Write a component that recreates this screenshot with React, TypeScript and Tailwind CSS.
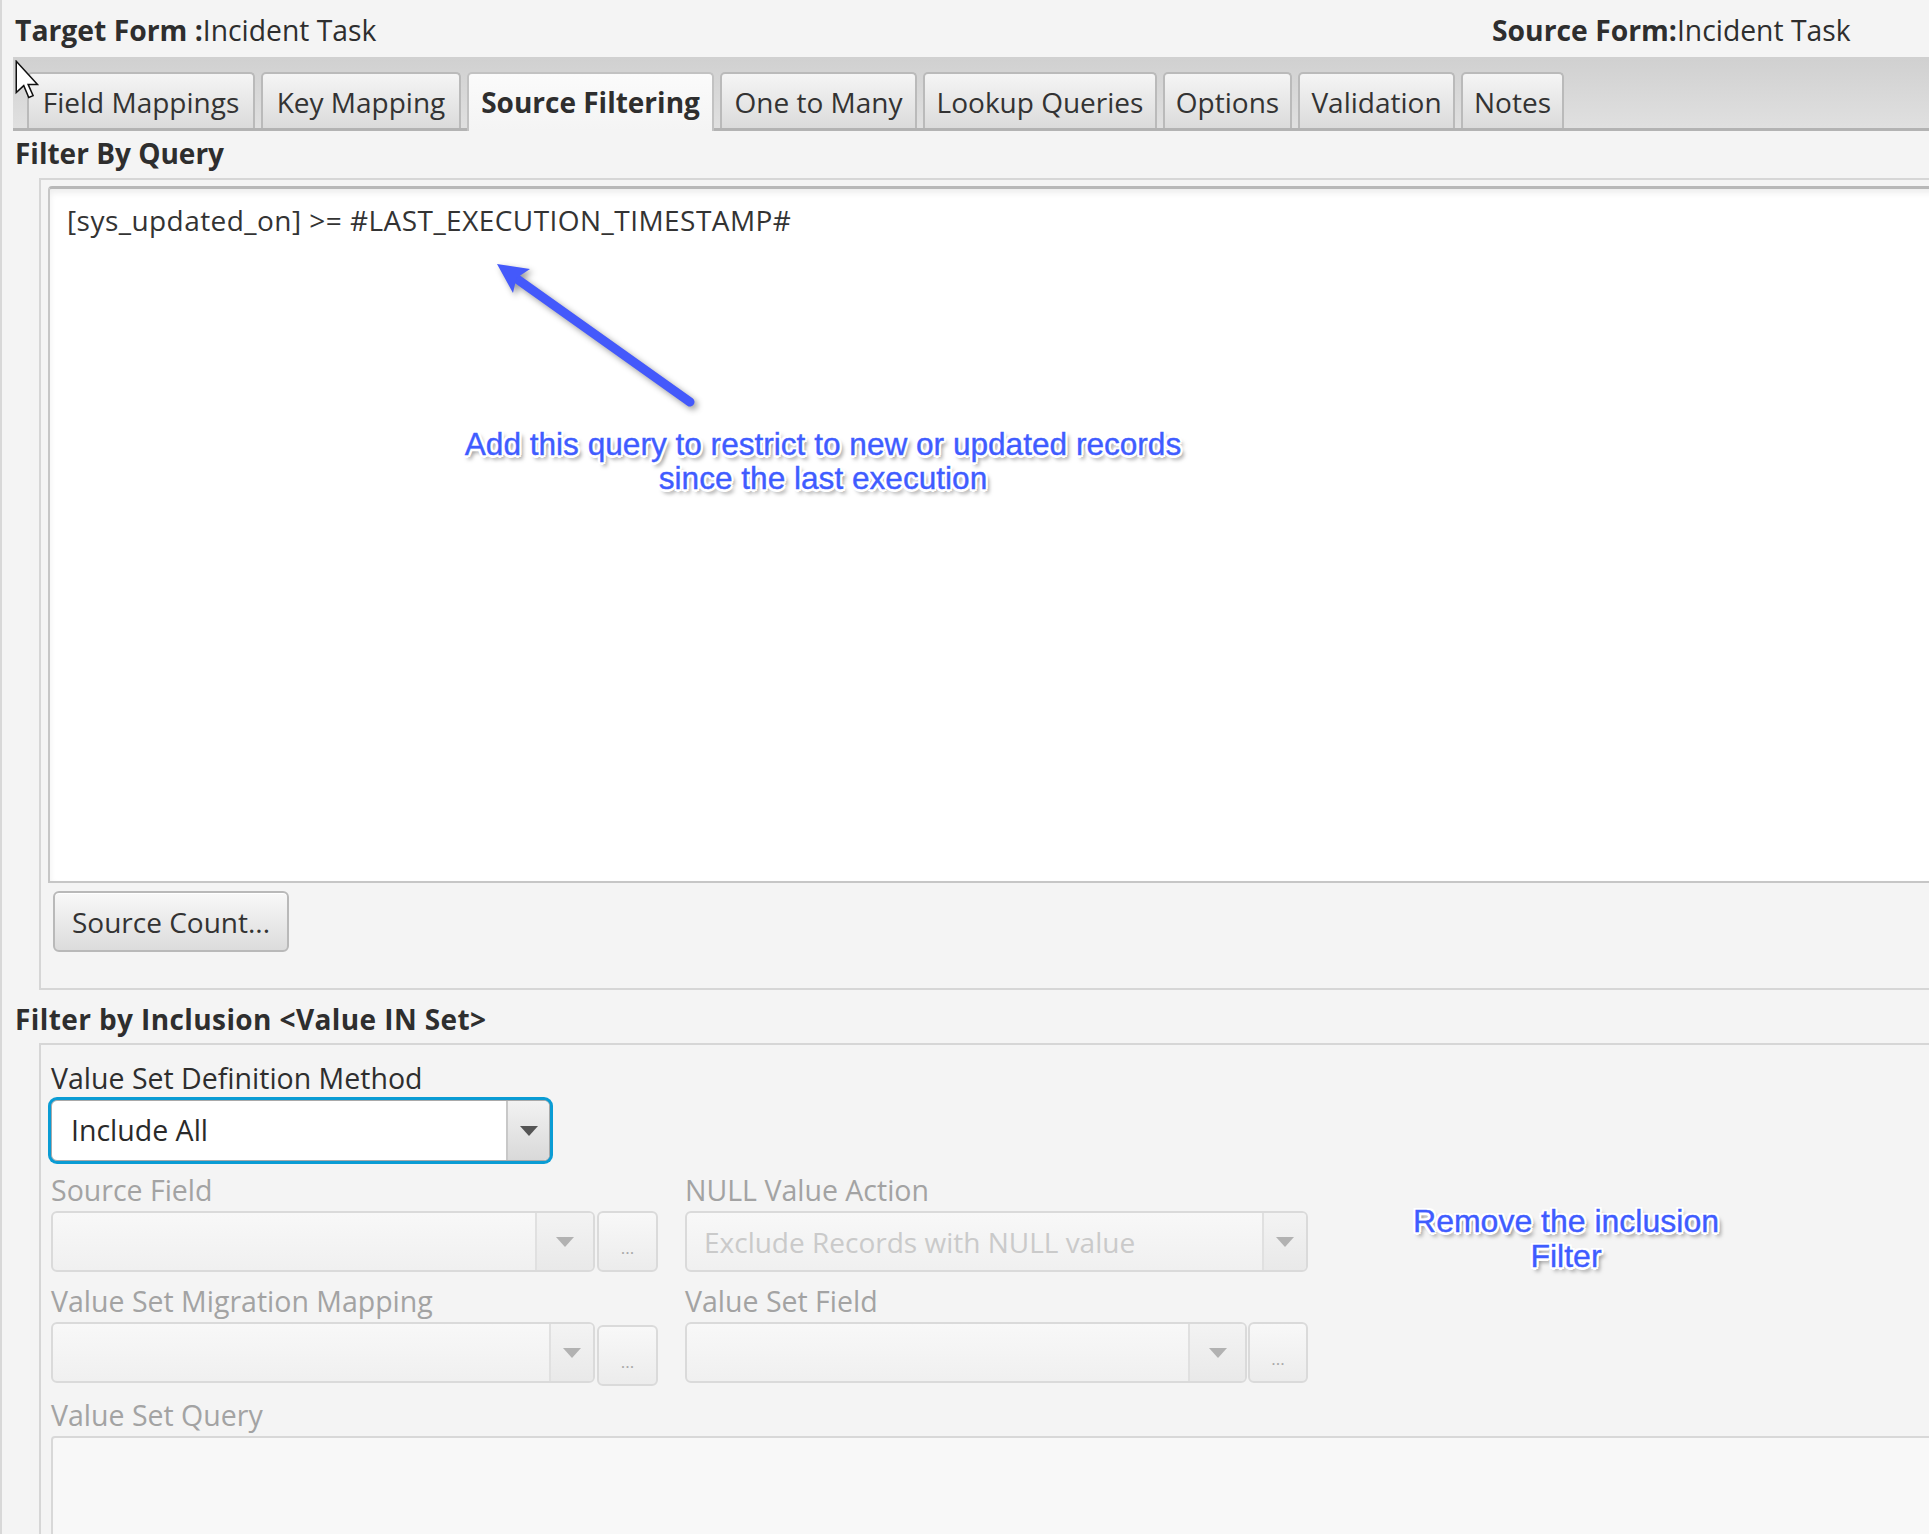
import React from "react";

type Tab = { label: string; w: string; active?: boolean };

const tabs: Tab[] = [
  { label: "Field Mappings", w: "w-[228px]" },
  { label: "Key Mapping", w: "w-[200px]" },
  { label: "Source Filtering", w: "w-[247px]", active: true },
  { label: "One to Many", w: "w-[197px]" },
  { label: "Lookup Queries", w: "w-[234px]" },
  { label: "Options", w: "w-[129px]" },
  { label: "Validation", w: "w-[157px]" },
  { label: "Notes", w: "w-[103px]" },
];

function TabButton({ tab }: { tab: Tab }) {
  if (tab.active) {
    return (
      <div
        className={`relative z-10 -mb-[3px] flex h-[59px] ${tab.w} items-center justify-center rounded-t-[5px] border-2 border-b-0 border-[#c2c2c2] bg-gradient-to-b from-[#fbfbfb] to-[#f4f4f4] pb-[2px] text-[28px] font-bold text-[#2e2e2e]`}
      >
        {tab.label}
      </div>
    );
  }
  return (
    <div
      className={`flex h-[56px] ${tab.w} items-center justify-center rounded-t-[5px] border-2 border-b-0 border-[#bababa] bg-gradient-to-b from-[#f5f5f5] to-[#dbdbdb] pt-[1px] text-[28px] text-[#333]`}
    >
      {tab.label}
    </div>
  );
}

function Triangle({ dark }: { dark?: boolean }) {
  return dark ? (
    <div className="h-0 w-0 border-x-[9px] border-t-[10px] border-x-transparent border-t-[#555]" />
  ) : (
    <div className="h-0 w-0 border-x-[9px] border-t-[10px] border-x-transparent border-t-[#b2b2b2]" />
  );
}

function Label({ children, muted }: { children: React.ReactNode; muted?: boolean }) {
  return (
    <div
      className={`flex h-[36px] items-center text-[28.5px] leading-[36px] ${muted ? "text-[#a3a3a3]" : "text-[#2e2e2e]"}`}
    >
      {children}
    </div>
  );
}

function DisabledCombo({ w, arrow, text }: { w: string; arrow: string; text?: string }) {
  return (
    <div
      className={`flex h-[61px] ${w} overflow-hidden rounded-[6px] border-2 border-[#dadada] bg-gradient-to-b from-[#f8f8f8] to-[#f0f0f0]`}
    >
      <div className="flex flex-1 items-center pl-[17px] text-[28px] text-[#cacaca]">{text}</div>
      <div
        className={`flex ${arrow} items-center justify-center border-l-2 border-[#e0e0e0] bg-gradient-to-b from-[#f3f3f3] to-[#e9e9e9]`}
      >
        <Triangle />
      </div>
    </div>
  );
}

function DotsButton({ w, offset }: { w: string; offset?: boolean }) {
  return (
    <div
      className={`flex h-[61px] ${w} ${offset ? "mt-[3px]" : ""} items-end justify-center rounded-[6px] border-2 border-[#dadada] bg-gradient-to-b from-[#f8f8f8] to-[#ececec] pb-[14px] text-[17px] leading-none text-[#a8a8a8]`}
    >
      ...
    </div>
  );
}

function MouseCursor() {
  return (
    <svg
      className="absolute left-[13px] top-[60px]"
      width="25"
      height="40"
      viewBox="0 0 20 32"
    >
      <path
        d="M1 1 L1 26 L7 20.5 L11 30 L14.5 28.5 L10.5 19.5 L18 19.5 Z"
        fill="#fff"
        stroke="#111"
        strokeWidth="1.2"
        strokeLinejoin="miter"
      />
    </svg>
  );
}

function PointerArrow() {
  return (
    <svg
      className="absolute left-[478px] top-[250px] drop-shadow-[3px_3px_3px_rgba(0,0,0,0.4)]"
      width="240"
      height="170"
      viewBox="480 250 240 170"
    >
      <line
        x1="517"
        y1="279"
        x2="690"
        y2="402"
        stroke="#4459fb"
        strokeWidth="9"
        strokeLinecap="round"
      />
      <polygon points="497,264 530,269 516.5,278 513,293" fill="#4459fb" />
    </svg>
  );
}

const calloutText =
  "text-center text-[#3f5cff] [font-family:'Liberation_Sans',Arial,sans-serif] [-webkit-text-stroke:0.4px_#3f5cff] [text-shadow:-2px_-2px_0_#fff,2px_-2px_0_#fff,-2px_2px_0_#fff,2px_2px_0_#fff,0_2.5px_0_#fff,2.5px_0_0_#fff,0_-2.5px_0_#fff,-2.5px_0_0_#fff,3px_4px_4px_rgba(0,0,0,0.55)]";

export default function App() {
  return (
    <div className="relative flex h-[1534px] w-[1929px] flex-col overflow-hidden border-l-2 border-[#d8d8d8] bg-[#f4f4f4] text-[#2e2e2e] [font-family:'Open_Sans',sans-serif]">
      {/* form names */}
      <header className="flex h-[57px] shrink-0 items-center pt-[3px] text-[28.3px]">
        <div className="w-[1490px] pl-[13px]">
          <span className="font-bold">Target Form :</span>Incident Task
        </div>
        <div>
          <span className="font-bold">Source Form:</span>Incident Task
        </div>
      </header>

      {/* tab strip */}
      <nav className="ml-[11px] flex h-[74px] shrink-0 items-end gap-[6px] border-b-[3px] border-[#b3b3b3] bg-gradient-to-b from-[#d0d0d0] to-[#e0e0e0] pl-[14px]">
        {tabs.map((t) => (
          <TabButton key={t.label} tab={t} />
        ))}
      </nav>

      {/* query filter */}
      <div className="flex h-[47px] shrink-0 items-center pb-[3px] pl-[13px] text-[28px] font-bold">
        Filter By Query
      </div>
      <section className="ml-[37px] h-[812px] w-[1900px] shrink-0 border-2 border-[#d6d6d6] pl-[7px] pt-[6px]">
        <div className="h-[697px] w-[1900px] rounded-tl-[4px] border-2 border-t-[3px] border-[#c6c6c6] border-t-[#b8b8b8] bg-white pl-[17px] pt-[13px] text-[28px] leading-[36px] tracking-[0.45px] text-[#333] shadow-[inset_0_4px_6px_rgba(0,0,0,0.07)]">
          {"[sys_updated_on] >= #LAST_EXECUTION_TIMESTAMP#"}
        </div>
        <div className="ml-[5px] mt-[8px] flex h-[61px] w-[236px] items-center justify-center rounded-[6px] border-2 border-[#b9b9b9] bg-gradient-to-b from-[#f8f8f8] to-[#dcdcdc] text-[28px] text-[#333] shadow-[inset_0_1px_0_#fff]">
          Source Count...
        </div>
      </section>

      {/* inclusion filter */}
      <div className="flex h-[53px] shrink-0 items-center pl-[13px] pt-[4px] text-[28px] font-bold tracking-[0.4px]">
        {"Filter by Inclusion <Value IN Set>"}
      </div>
      <section className="ml-[37px] w-[1900px] flex-1 border-2 border-b-0 border-[#d6d6d6] pl-[10px] pt-[15px]">
        <Label>Value Set Definition Method</Label>
        <div className="mt-[4px] flex h-[61px] w-[499px] overflow-hidden rounded-[6px] border border-[#a9a9a9] bg-white shadow-[0_0_0_3px_#0a9cd4]">
          <div className="flex flex-1 items-center pl-[19px] text-[28.5px] text-[#2a2a2a]">Include All</div>
          <div className="flex w-[43px] items-center justify-center border-l-2 border-[#c8c8c8] bg-gradient-to-b from-[#f2f2f2] to-[#d9d9d9]">
            <Triangle dark />
          </div>
        </div>

        <div className="mt-[11px] flex gap-[27px]">
          <div className="w-[607px]">
            <Label muted>Source Field</Label>
            <div className="mt-[3px] flex gap-[2px]">
              <DisabledCombo w="w-[544px]" arrow="w-[58px]" />
              <DotsButton w="w-[61px]" />
            </div>
            <div className="mt-[11px]">
              <Label muted>Value Set Migration Mapping</Label>
            </div>
            <div className="mt-[3px] flex gap-[2px]">
              <DisabledCombo w="w-[544px]" arrow="w-[44px]" />
              <DotsButton w="w-[61px]" offset />
            </div>
          </div>
          <div className="w-[623px]">
            <Label muted>NULL Value Action</Label>
            <div className="mt-[3px] flex">
              <DisabledCombo w="w-[623px]" arrow="w-[44px]" text="Exclude Records with NULL value" />
            </div>
            <div className="mt-[11px]">
              <Label muted>Value Set Field</Label>
            </div>
            <div className="mt-[3px] flex gap-[1px]">
              <DisabledCombo w="w-[562px]" arrow="w-[57px]" />
              <DotsButton w="w-[60px]" />
            </div>
          </div>
        </div>

        <div className="mt-[11px]">
          <Label muted>Value Set Query</Label>
        </div>
        <div className="mt-[3px] h-[200px] w-[1900px] rounded-tl-[4px] border-2 border-[#d8d8d8] bg-[#f8f8f8]" />
      </section>

      {/* callouts */}
      <PointerArrow />
      <div className={`absolute left-[421px] top-[427px] w-[800px] text-[31.6px] leading-[34px] ${calloutText}`}>
        Add this query to restrict to new or updated records
        <br />
        since the last execution
      </div>
      <div className={`absolute left-[1364px] top-[1204px] w-[400px] text-[32px] leading-[35px] ${calloutText}`}>
        Remove the inclusion
        <br />
        Filter
      </div>

      <MouseCursor />
    </div>
  );
}
